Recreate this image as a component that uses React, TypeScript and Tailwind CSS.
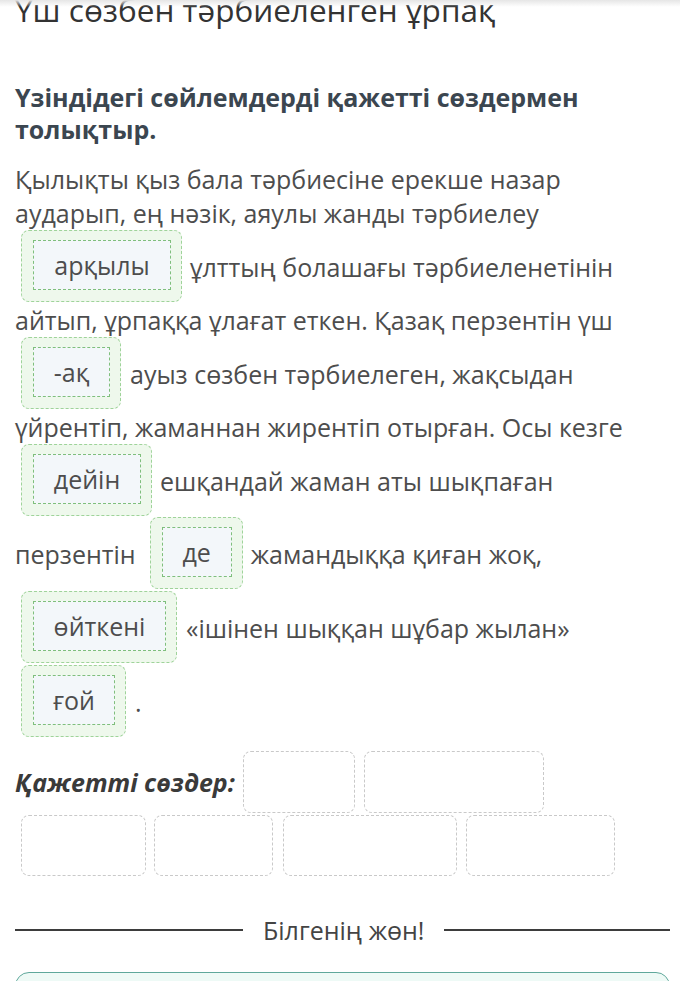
import React from "react";

const font = { fontFamily: '"Open Sans", "Noto Sans", sans-serif' };

function Blank({ word, w }: { word: string; w: string }) {
  return (
    <div
      className={`${w} h-[72px] shrink-0 rounded-[8px] border border-dashed border-[#9fd39a] bg-[#eef8ec] pt-[9px] pl-[11px] pr-[10px] pb-[11px]`}
    >
      <div className="flex h-full w-full items-center justify-center border border-dashed border-[#7fbf7c] bg-[#f3f7fa] text-[25px] leading-[34px] text-[#4d4d4d]">
        {word}
      </div>
    </div>
  );
}

function Empty({ w, h }: { w: string; h: string }) {
  return (
    <div
      className={`${w} ${h} shrink-0 rounded-[8px] border border-dashed border-[#c9c9c9] bg-white`}
    />
  );
}

export default function App() {
  return (
    <div
      className="relative w-[680px] min-h-[981px] overflow-hidden bg-white pl-[15px] pr-[10px]"
      style={font}
    >
      <div className="pointer-events-none absolute left-0 right-0 top-0 h-[7px] bg-gradient-to-b from-[#e6e6e6] to-transparent" />

      <h1 className="mt-[-7px] whitespace-nowrap text-[31.5px] leading-[34px] font-normal text-[#333333]">
        Үш сөзбен тәрбиеленген ұрпақ
      </h1>

      <h2 className="mt-[54px] text-[25px] leading-[32px] font-bold text-[#3b4650]">
        <div className="whitespace-nowrap">Үзіндідегі сөйлемдерді қажетті сөздермен</div>
        <div className="whitespace-nowrap">толықтыр.</div>
      </h2>

      <div className="mt-[17px] text-[25px] leading-[34px] text-[#4d4d4d]">
        <div className="whitespace-nowrap">Қылықты қыз бала тәрбиесіне ерекше назар</div>
        <div className="whitespace-nowrap">аударып, ең нәзік, аяулы жанды тәрбиелеу</div>

        <div className="flex h-[73px] items-start whitespace-nowrap">
          <div className="ml-[6px]">
            <Blank word="арқылы" w="w-[161px]" />
          </div>
          <span className="ml-[8px] self-center">ұлттың болашағы тәрбиеленетінін</span>
        </div>

        <div className="whitespace-nowrap">айтып, ұрпаққа ұлағат еткен. Қазақ перзентін үш</div>

        <div className="flex h-[73px] items-start whitespace-nowrap">
          <div className="ml-[6px]">
            <Blank word="-ақ" w="w-[100px]" />
          </div>
          <span className="ml-[9px] self-center">ауыз сөзбен тәрбиелеген, жақсыдан</span>
        </div>

        <div className="whitespace-nowrap">үйрентіп, жаманнан жирентіп отырған. Осы кезге</div>

        <div className="flex h-[73px] items-start whitespace-nowrap">
          <div className="ml-[6px]">
            <Blank word="дейін" w="w-[131px]" />
          </div>
          <span className="ml-[8px] self-center">ешқандай жаман аты шықпаған</span>
        </div>

        <div className="flex h-[74px] items-start whitespace-nowrap">
          <span className="self-center">перзентін</span>
          <div className="ml-[14px]">
            <Blank word="де" w="w-[93px]" />
          </div>
          <span className="ml-[8px] self-center">жамандыққа қиған жоқ,</span>
        </div>

        <div className="flex h-[74px] items-start whitespace-nowrap">
          <div className="ml-[6px]">
            <Blank word="өйткені" w="w-[156px]" />
          </div>
          <span className="ml-[9px] self-center">«ішінен шыққан шұбар жылан»</span>
        </div>

        <div className="flex h-[73px] items-start whitespace-nowrap">
          <div className="ml-[6px]">
            <Blank word="ғой" w="w-[105px]" />
          </div>
          <span className="ml-[9px] self-center">.</span>
        </div>
      </div>

      <div className="mt-[13px] flex items-center gap-[8px]">
        <span className="whitespace-nowrap text-[25px] leading-[34px] font-bold italic text-[#3a3a3a]">
          Қажетті сөздер:
        </span>
        <Empty w="w-[112px]" h="h-[62px]" />
        <div className="ml-[1px]">
          <Empty w="w-[180px]" h="h-[62px]" />
        </div>
      </div>
      <div className="mt-[2px] flex items-center pl-[6px]">
        <Empty w="w-[125px]" h="h-[61px]" />
        <div className="ml-[8px]">
          <Empty w="w-[119px]" h="h-[61px]" />
        </div>
        <div className="ml-[10px]">
          <Empty w="w-[174px]" h="h-[61px]" />
        </div>
        <div className="ml-[9px]">
          <Empty w="w-[149px]" h="h-[61px]" />
        </div>
      </div>

      <div className="mt-[37px] flex items-center">
        <div className="h-[2px] w-[228px] bg-[#3d3d3d]" />
        <span className="ml-[20px] whitespace-nowrap text-[25px] leading-[34px] font-normal text-[#444444]">
          Білгенің жөн!
        </span>
        <div className="ml-[20px] h-[2px] flex-1 bg-[#3d3d3d]" />
      </div>

      <div className="mt-[25px] h-[60px] rounded-[14px] border border-[#5fa89b] bg-[#eefaf6]" />
    </div>
  );
}
